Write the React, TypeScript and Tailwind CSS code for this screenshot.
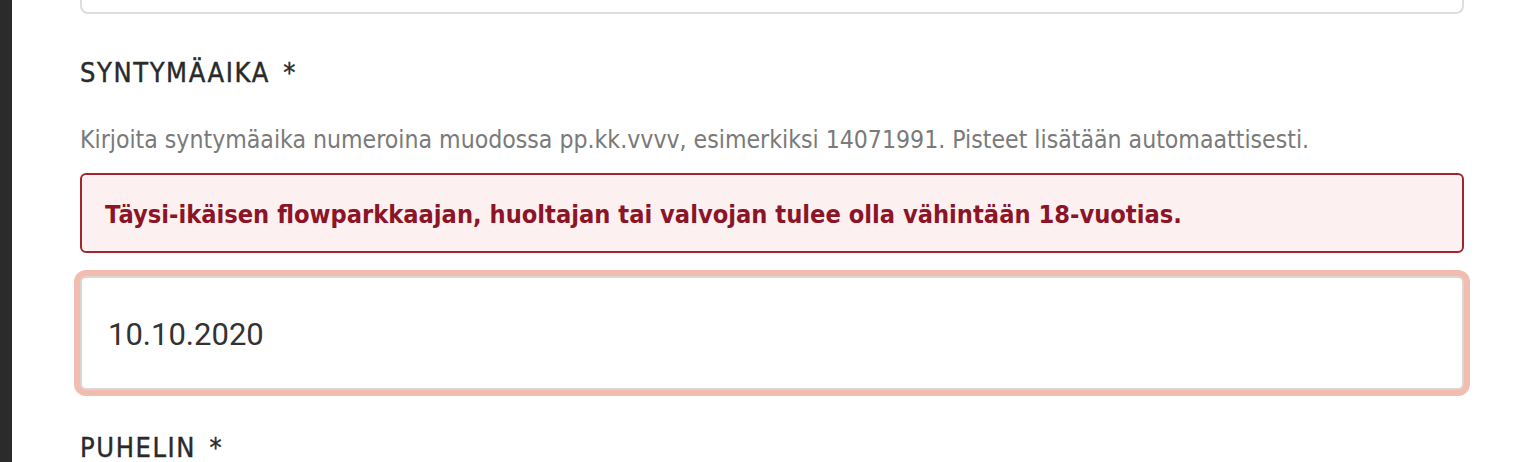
const font = { fontFamily: "'DejaVu Sans Condensed', 'DejaVu Sans', sans-serif" };

function Label({ children }: { children: React.ReactNode }) {
  return (
    <div className="text-[27px] leading-[27px] uppercase tracking-[1.6px] text-[#2a2a2a] [-webkit-text-stroke:0.4px_#2a2a2a]">
      {children} <span className="ml-1">*</span>
    </div>
  );
}

export default function App() {
  return (
    <div className="flex h-[462px] overflow-hidden bg-white" style={font}>
      <div className="w-[12px] shrink-0 bg-[#2b2b2b]" />
      <div className="flex-1 pl-[68px] pr-[64px]">
        {/* bottom of previous field */}
        <div className="h-[14px] rounded-b-[8px] border-x-2 border-b-2 border-[#dddddd]" />

        <div className="mt-[45px]">
          <Label>Syntymäaika</Label>
        </div>

        <p className="mt-[41px] text-[24.6px] leading-[25px] text-[#7a7a7a]">
          Kirjoita syntymäaika numeroina muodossa pp.kk.vvvv, esimerkiksi 14071991. Pisteet lisätään automaattisesti.
        </p>

        <div className="mt-[21px] flex h-[80px] items-center rounded-[6px] border-2 border-[#a3262f] bg-[#fcf0f0] pl-[23px] pt-[3px]">
          <span className="text-[25.2px] leading-[25.5px] font-bold text-[#8b1526]">
            Täysi-ikäisen flowparkkaajan, huoltajan tai valvojan tulee olla vähintään 18-vuotias.
          </span>
        </div>

        <div className="mt-[23px] flex h-[114px] items-center rounded-[6px] border-2 border-[#dcd6d2] bg-white pl-[26px] pt-[2px] shadow-[0_0_0_6px_#f2bcb0]">
          <span className="text-[31px] leading-[31px] text-[#333333]" style={{ fontFamily: "Roboto, sans-serif" }}>
            10.10.2020
          </span>
        </div>

        <div className="mt-[44px]">
          <Label>Puhelin</Label>
        </div>
      </div>
    </div>
  );
}
